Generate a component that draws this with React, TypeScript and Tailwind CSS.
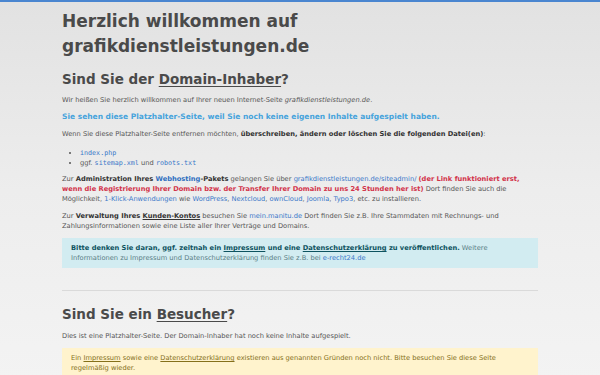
export default function App() {
    const link = 'text-[#3a78c9]';
    const mono = "font-['DejaVu_Sans_Mono',monospace]";
    return (
        <div className="min-h-[375px] w-full border-t-2 border-[#4a86d0] bg-gradient-to-b from-[#e2e2e2] via-[#ededed] to-[#f3f3f3] font-['DejaVu_Sans',sans-serif] text-[#555]">
            <div className="mx-auto w-[476px] pt-[7px]">
                <h1 className="text-[17px] font-bold leading-[25px] text-[#4a4a4a]">
                    Herzlich willkommen auf
                    <br />
                    grafikdienstleistungen.de
                </h1>
                <h2 className="mt-[10px] text-[13.5px] font-bold leading-[20px] text-[#4a4a4a]">
                    Sind Sie der <span className="underline decoration-1 underline-offset-2">Domain-Inhaber</span>?
                </h2>
                <p className="mt-[6px] text-[6.7px] leading-[10px]">
                    Wir heißen Sie herzlich willkommen auf Ihrer neuen Internet-Seite <i>grafikdienstleistungen.de</i>.
                </p>
                <p className="mt-[7px] text-[7.5px] font-bold leading-[10px] text-[#45a3dc]">
                    Sie sehen diese Platzhalter-Seite, weil Sie noch keine eigenen Inhalte aufgespielt haben.
                </p>
                <p className="mt-[7px] text-[6.7px] leading-[10px]">
                    Wenn Sie diese Platzhalter-Seite entfernen möchten, <b className="text-[#333]">überschreiben, ändern oder löschen Sie die folgenden Datei(en)</b>:
                </p>
                <ul className="mt-[9px] list-disc pl-[18px] text-[6.7px] leading-[10px]">
                    <li><code className={`${mono} ${link}`}>index.php</code></li>
                    <li>
                        ggf. <code className={`${mono} ${link}`}>sitemap.xml</code> und{' '}
                        <code className={`${mono} ${link}`}>robots.txt</code>
                    </li>
                </ul>
                <p className="mt-[6px] text-[6.7px] leading-[10px]">
                    Zur <b className="text-[#333]">Administration Ihres <span className="text-[#2f6fc0]">Webhosting</span>-Pakets</b> gelangen Sie über{' '}
                    <span className={link}>grafikdienstleistungen.de/siteadmin/</span>{' '}
                    <b className="text-[#d2334a]">(der Link funktioniert erst, wenn die Registrierung Ihrer Domain bzw. der Transfer Ihrer Domain zu uns 24 Stunden her ist)</b>{' '}
                    Dort finden Sie auch die Möglichkeit, <span className={link}>1-Klick-Anwendungen</span> wie{' '}
                    <span className={link}>WordPress</span>, <span className={link}>Nextcloud</span>, <span className={link}>ownCloud</span>,{' '}
                    <span className={link}>Joomla</span>, <span className={link}>Typo3</span>, etc. zu installieren.
                </p>
                <p className="mt-[7px] text-[6.7px] leading-[10px]">
                    Zur <b className="text-[#333]">Verwaltung Ihres <span className="underline">Kunden-Kontos</span></b> besuchen Sie{' '}
                    <span className={link}>mein.manitu.de</span> Dort finden Sie z.B. Ihre Stammdaten mit Rechnungs- und Zahlungsinformationen sowie eine Liste aller Ihrer Verträge und Domains.
                </p>
                <div className="mt-[7px] bg-[#d2ecf1] px-[9px] py-[5px] text-[6.7px] leading-[10px] text-[#5a7f86]">
                    <b className="text-[#0e5360]">
                        Bitte denken Sie daran, ggf. zeitnah ein <span className="underline">Impressum</span> und eine{' '}
                        <span className="underline">Datenschutzerklärung</span> zu veröffentlichen.
                    </b>{' '}
                    Weitere Informationen zu Impressum und Datenschutzerklärung finden Sie z.B. bei <span className={link}>e-recht24.de</span>
                </div>
                <hr className="mt-[22px] border-t border-[#dadada]" />
                <h2 className="mt-[13px] text-[13.5px] font-bold leading-[20px] text-[#4a4a4a]">
                    Sind Sie ein <span className="underline decoration-1 underline-offset-2">Besucher</span>?
                </h2>
                <p className="mt-[7px] text-[6.7px] leading-[10px]">
                    Dies ist eine Platzhalter-Seite. Der Domain-Inhaber hat noch keine Inhalte aufgespielt.
                </p>
                <div className="mt-[7px] bg-[#fff3cd] px-[9px] py-[5px] text-[6.7px] leading-[10px] text-[#85701a]">
                    Ein <span className="underline">Impressum</span> sowie eine <span className="underline">Datenschutzerklärung</span> existieren aus genannten Gründen noch nicht. Bitte besuchen Sie diese Seite regelmäßig wieder.
                </div>
            </div>
        </div>
    );
}
